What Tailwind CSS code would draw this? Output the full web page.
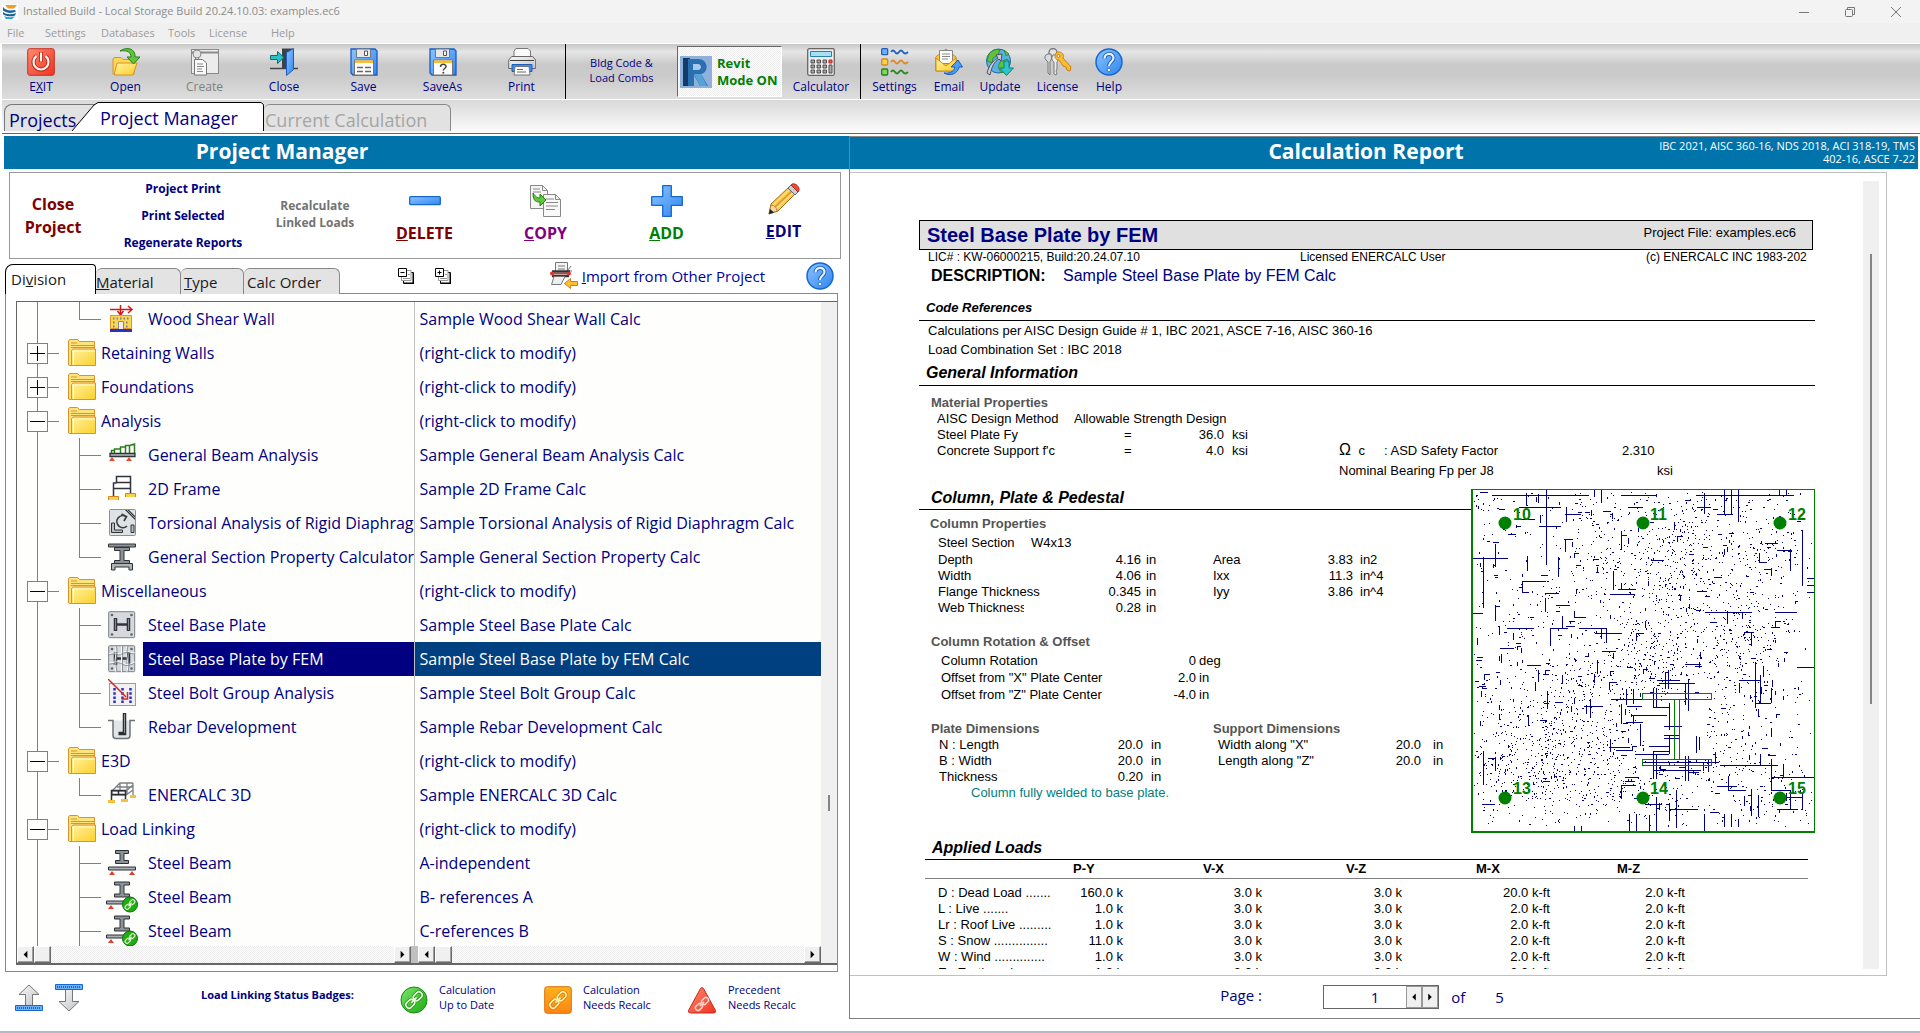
<!DOCTYPE html>
<html lang="en">
  <head>
    <meta charset="UTF-8" />
    <meta name="viewport" content="width=device-width, initial-scale=1.0" />
    <title>Installed Build - Local Storage Build 20.24.10.03: examples.ec6</title>
    <script src="https://cdn.jsdelivr.net/npm/@tailwindcss/browser@4"></script>
    <style>
      body {
        font-family: "Open Sans", "Noto Sans", sans-serif;
      }

      .report {
        font-family: "Liberation Sans", Arial, sans-serif;
      }

      .toolbar-bg {
        background: linear-gradient(#c6c6c6 0%, #e6e6e6 14%, #c9c9c9 38%, #cbcbcb 60%, #dedede 100%);
      }

      .dither {
        background: repeating-conic-gradient(#ececec 0% 25%, #ffffff 0% 50%) 0 0 / 2px 2px;
      }

      .bevel {
        border: 1px solid;
        border-color: #fff #696969 #696969 #fff;
        box-shadow: inset -1px -1px #a0a0a0;
      }
    </style>
  </head>
  <body class="h-screen flex flex-col overflow-hidden bg-white text-[#000080]">
    <!-- Icon sprite -->
    <svg class="absolute h-0 w-0" aria-hidden="true">
      <linearGradient id="gBlue" x1="0" y1="0" x2="1" y2="1"><stop offset="0" stop-color="#8cc4ff" /><stop offset="1" stop-color="#2f86f0" /></linearGradient>
      <linearGradient id="gYellow" x1="0" y1="0" x2="1" y2="1"><stop offset="0" stop-color="#fff2a0" /><stop offset="1" stop-color="#fcd02c" /></linearGradient>
      <linearGradient id="gRed" x1="0" y1="0" x2="1" y2="1"><stop offset="0" stop-color="#ff8a6e" /><stop offset="1" stop-color="#ef3323" /></linearGradient>
      <linearGradient id="gGray" x1="0" y1="0" x2="1" y2="1"><stop offset="0" stop-color="#f8f8f8" /><stop offset="1" stop-color="#c0c4c8" /></linearGradient>
      <linearGradient id="gGreen" x1="0" y1="0" x2="1" y2="1"><stop offset="0" stop-color="#7ae86a" /><stop offset="1" stop-color="#1ea814" /></linearGradient>
      <linearGradient id="gOrange" x1="0" y1="0" x2="0" y2="1"><stop offset="0" stop-color="#ffb21c" /><stop offset="1" stop-color="#ff8413" /></linearGradient>

      <symbol id="folder" viewBox="0 0 28 28">
        <path d="M.5 26V2l1-1.500h8l2 2h15v24H2z" fill="#fbe47c" stroke="#e0912a" />
        <path d="M3 4h6M3 6.500h23M3 8.500h24" stroke="#e0912a" fill="none" />
        <path d="M3.500 26.500V11.500L5 10h22.500v16.500z" fill="url(#gYellow)" stroke="#e0912a" />
        <path d="M5.500 26V12h21" stroke="#fffbd8" fill="none" />
      </symbol>
      <symbol id="shearWall" viewBox="0 0 28 28">
        <path d="M2 4.500h22M20 1l4 3.500-4 3.500M12.500 0v9M9.500 6l3 4 3-4" stroke="#d01818" stroke-width="1.500" fill="none" />
        <path d="M2.500 10.500h21v13h-21z" fill="#fbd754" stroke="#e0952a" />
        <path d="M5 13.500h16M5 17.500h3M5 21.500h3M18 17.500h3M18 21.500h3" stroke="#7c7c9c" stroke-width="2" stroke-dasharray="1.500 2" />
        <path d="M10.500 24v-7.500h5V24" fill="#eee" stroke="#888" />
        <path d="M2 24h22v3H2z" fill="#2730c8" />
      </symbol>
      <symbol id="beam" viewBox="0 0 28 28">
        <path d="M3.500 12V9.500h3V12M6.500 9.500V8h6v4M12.500 8V6h5v6M17.500 6V4.500h4V12M21.500 4.500l5-1.500v9" stroke="#2a7f1c" stroke-width="1.500" fill="none" />
        <path d="M2 12.500h25v3H2z" fill="#b8bcc0" stroke="#303338" stroke-width="1.300" />
        <path d="M4 16l3 4H1zM21 16l3 4h-6z" fill="#ef4333" />
      </symbol>
      <symbol id="frame" viewBox="0 0 28 28">
        <path d="M8.500 8V1.500h14V19M8.500 7.500h14M5.500 21v-13h3M5.500 13.500h17" stroke="#30343c" stroke-width="1.500" fill="none" />
        <path d="M1 22h9v3H1zM18 19h9v3h-9z" fill="#fcd24a" />
        <path d="M.500 21.500h10V25M.500 25v-3.500M17.500 18.500h10V22M17.500 22v-3.500" stroke="#d8821a" fill="none" />
      </symbol>
      <symbol id="torsion" viewBox="0 0 28 28">
        <rect x="1.500" y=".500" width="26" height="26" rx="1" fill="#dfe2e5" stroke="#8b9096" />
        <path d="M17 1h4l6 6v4z" fill="#2f3338" /><path d="M19 1l8 8" stroke="#9aa" />
        <path d="M3.500 14v9.500h11v-2.500h-8V14zM23 16h3v7.500h-3z" fill="#b9bec4" stroke="#2f3338" />
        <path d="M18 7.500a6 6 0 1 0 1 9.500M13.500 5l5 2.500-2.500 4.500" stroke="#3a3e44" stroke-width="1.700" fill="none" />
      </symbol>
      <symbol id="section" viewBox="0 0 28 28">
        <path d="M.500 1h27v3h-27zM6.500 4.500h15v3h-5.500v10h5.500v3h-15v-3h5.500v-10h-5.500z" fill="#8d9296" stroke="#2f3338" />
        <path d="M3.500 27v-6.500h21V27h-3.500v-3h-14v3z" fill="#aeb3b8" stroke="#2f3338" />
      </symbol>
      <symbol id="plate" viewBox="0 0 28 28">
        <rect x=".700" y=".700" width="26" height="26" rx="1" fill="#d5d9dd" stroke="#7a7f86" />
        <path d="M7.500 7v13M20.500 7v13" stroke="#30343a" stroke-width="3.500" /><path d="M8 13.500h12" stroke="#30343a" stroke-width="2.500" />
        <path d="M7.500 8v11M20.500 8v11" stroke="#868b92" />
        <g fill="#60656b"><circle cx="4" cy="4" r="1.300" /><circle cx="23.500" cy="4" r="1.300" /><circle cx="4" cy="23.500" r="1.300" /><circle cx="23.500" cy="23.500" r="1.300" /></g>
      </symbol>
      <symbol id="plateFem" viewBox="0 0 28 28">
        <use href="#plate" width="28" height="28" />
        <path d="M1 9c7-3 9 2 13-1s9 0 13 0M1 18c6 0 8-3 13 0s9 1 13-1M7 1c3 8-2 12 1 26M19 1c-3 8 3 14 0 26M13.500 1v26" stroke="#fff" stroke-width="1" fill="none" />
        <path d="M1 10c7-3 9 2 13-1s9 0 13 0M1 19c6 0 8-3 13 0s9 1 13-1M8 1c3 8-2 12 1 26M20 1c-3 8 3 14 0 26M14.500 1v26" stroke="#777c83" stroke-width=".800" fill="none" />
      </symbol>
      <symbol id="bolts" viewBox="0 0 28 28">
        <rect x="1.500" y="4.500" width="26" height="22" fill="#f1f1f4" stroke="#9a9ca4" />
        <path d="M6.500 9v15M14.500 9v15M22.500 9v15" stroke="#2c2cd0" stroke-width="2.500" stroke-dasharray="2.500 1.700" />
        <path d="M0 0l18 18M19.500 13v7h-6" stroke="#cc2b20" stroke-width="1.500" fill="none" />
      </symbol>
      <symbol id="rebar" viewBox="0 0 28 28">
        <path d="M0 7.500h5v15q0 3 3 3h11q3 0 3-3v-15h5" fill="#e2e5e8" stroke="#6b7178" stroke-width="1.500" />
        <path d="M16.500 0v20.500h-6" stroke="#2b2e33" stroke-width="3.500" fill="none" /><path d="M16.500 1v19" stroke="#8f949a" />
      </symbol>
      <symbol id="frame3d" viewBox="0 0 28 28">
        <path d="M8 6L12 2h13M8 6l-4 4v4M12 2v8M25 2v12M19 2v11M4 10h14l7-6M4 14h14l7-5M12 6h13M9 6h13" stroke="#7b8086" stroke-width="1.300" fill="none" />
        <path d="M3.500 19V9.500h14V19M10.500 9.500V14M3.500 13.500h14" stroke="#2c3036" stroke-width="1.500" fill="none" />
        <path d="M0 19h7v3H0zM13 18h7v3h-7zM22 14h6v3h-6z" fill="#f8bf3a" />
      </symbol>
      <symbol id="steelBeam" viewBox="0 0 28 28">
        <path d="M7.500 1.500h13v3h-4.500v7h4.500v3h-13v-3h4.500v-7h-4.500z" fill="#8d9296" stroke="#2c3036" />
        <path d="M.500 18h27v3H.500z" fill="#a9aeb4" stroke="#2c3036" />
        <path d="M4 22l3 4H1zM24 22l3 4h-6z" fill="#e83a2c" />
      </symbol>
      <symbol id="chain" viewBox="0 0 16 16">
        <g fill="none" transform="rotate(-45 8 8)">
          <rect x="0" y="5.500" width="7.500" height="5" rx="2.200" /><rect x="8.500" y="5.500" width="7.500" height="5" rx="2.200" /><path d="M5 8h6" />
        </g>
      </symbol>
      <symbol id="beamLinked" viewBox="0 0 32 32">
        <path d="M8.500 1h15v3h-5.500v9h5.500v3h-15v-3h5.500v-9h-5.500z" fill="#8d9296" stroke="#2c3036" />
        <path d="M.500 20h18v3H.500z" fill="#a9aeb4" stroke="#2c3036" /><path d="M5 24l3 4H2z" fill="#e83a2c" />
        <circle cx="24" cy="23.500" r="7.500" fill="#22ac14" stroke="#0c6f08" />
        <use href="#chain" x="18" y="17.500" width="12" height="12" stroke="#eaffd8" stroke-width="1.500" />
      </symbol>
      <symbol id="help" viewBox="0 0 28 28">
        <circle cx="14" cy="14" r="13" fill="url(#gBlue)" stroke="#1668cf" stroke-width="1.500" />
        <path d="M9.500 10.500c0-6 9-6 9-.500 0 4-4.500 3.500-4.500 8" stroke="#1a5db8" stroke-width="4" fill="none" /><path d="M9.500 10.500c0-6 9-6 9-.500 0 4-4.500 3.500-4.500 8" stroke="#e8f4ff" stroke-width="2.200" fill="none" />
        <circle cx="14" cy="22" r="1.800" fill="#e8f4ff" stroke="#1a5db8" stroke-width=".700" />
      </symbol>
      <symbol id="floppy" viewBox="0 0 28 28">
        <path d="M1 1h24l2 2v24H3l-2-2z" fill="url(#gBlue)" stroke="#1a5cc0" stroke-width="1.300" />
        <path d="M6.500 1h14v8.500h-14z" fill="#e6e9ec" stroke="#777" /><path d="M14.500 3h3v4.500h-3z" fill="#fff" stroke="#555" />
        <path d="M4.500 12h19v15h-19z" fill="#fdfdfd" stroke="#777" /><path d="M5 12.500h18v2.500H5z" fill="#fbbd2c" />
      </symbol>
      <symbol id="arrowL" viewBox="0 0 16 16"><path d="M10 4v8L6 8z" fill="#000" /></symbol>
      <symbol id="arrowR" viewBox="0 0 16 16"><path d="M6 4v8l4-4z" fill="#000" /></symbol>
    </svg>

    <!-- Title bar -->
    <header class="flex h-[23px] shrink-0 items-center bg-[#f3f3f3] pl-0.5 text-[11px] text-[#8c8c8c]">
      <svg class="h-4 w-4" viewBox="0 0 16 16">
        <rect width="16" height="16" fill="#fff" />
        <path d="M3 1h12l-3 3.500H6z" fill="#f59a23" /><path d="M1 3c2 3 6 4 12 3l1 1.500c-4 2-9 2-13-1zM1 8c3 2.500 8 3 13 1l-1 2.500c-3 1.500-8 1-12-1z" fill="#17639c" /><path d="M2 12c3 1.500 7 1.500 11 .500L10 15H4z" fill="#2aa4dc" />
      </svg>
      <h1 class="ml-[5px]">Installed Build - Local Storage Build 20.24.10.03: examples.ec6</h1>
      <div class="ml-auto flex items-center gap-[34px] pr-[18px]">
        <button aria-label="Minimize"><svg class="h-3 w-3" viewBox="0 0 12 12"><path d="M1 6.500h10" stroke="#777" /></svg></button>
        <button aria-label="Restore"><svg class="h-3 w-3" viewBox="0 0 12 12" fill="none" stroke="#777"><rect x="1.500" y="3.500" width="7" height="7" rx="1" /><path d="M3.500 3V1.500h7v7H9" /></svg></button>
        <button aria-label="Close window"><svg class="h-3 w-3" viewBox="0 0 12 12"><path d="M1 1l10 10M11 1L1 11" stroke="#777" /></svg></button>
      </div>
    </header>

    <!-- Menu bar -->
    <nav class="flex h-5 shrink-0 items-center bg-[#f0f0f0] pl-[7px] text-[11px] text-[#9b9b9b]">
      <button class="w-[38px] text-left">File</button>
      <button class="w-14 text-left">Settings</button>
      <button class="w-[67px] text-left">Databases</button>
      <button class="w-[41px] text-left">Tools</button>
      <button class="w-[62px] text-left">License</button>
      <button>Help</button>
    </nav>

    <!-- Toolbar -->
    <div class="toolbar-bg ml-0.5 flex h-[57px] shrink-0 border-y border-white text-xs leading-4">
      <button class="mr-1.5 flex w-[78px] flex-col items-center gap-[3px] pt-1">
        <svg class="h-7 w-7" viewBox="0 0 28 28"><rect x=".700" y=".700" width="26.600" height="26.600" rx="2" fill="url(#gRed)" stroke="#c9301f" /><path d="M9.500 8a7.500 7.500 0 1 0 9 0" fill="none" stroke="#b02a1c" stroke-width="4" /><path d="M14 4v10" stroke="#b02a1c" stroke-width="4" /><path d="M9.500 8a7.500 7.500 0 1 0 9 0M14 4.500v9" fill="none" stroke="#fff0ea" stroke-width="2.200" /></svg>
        <span>E<u>X</u>IT</span>
      </button>
      <button class="flex w-[79px] flex-col items-center gap-[3px] pt-1">
        <svg class="h-7 w-7" viewBox="0 0 28 28"><path d="M1 26V11l1-1.500h7l2 2h11V26z" fill="#fbd754" stroke="#d9912a" /><path d="M2 27l3-12h20l-4 12z" fill="url(#gYellow)" stroke="#d9912a" /><path d="M8 3C15-2 24 1 23 9h5l-6.500 7L15 9h4c0-5-4-7-11-6z" fill="#62c43c" stroke="#2a7f1c" /></svg>
        <span>Open</span>
      </button>
      <button class="flex w-[79px] flex-col items-center gap-[3px] pt-1 text-[#7f7f7f]" disabled>
        <svg class="h-7 w-7" viewBox="0 0 28 28"><rect x=".500" y="1.500" width="27" height="24" fill="#ececec" stroke="#8a8a8a" /><path d="M1 4.500h26" stroke="#8a8a8a" stroke-width="2" /><path d="M20 2.500h6" stroke="#fff" stroke-dasharray="1 1" /><circle cx="6" cy="6" r="4" fill="#e4e4e4" stroke="#888" /><path d="M4.500 10v3h3v-3" stroke="#888" fill="none" /><path d="M3.500 11.500h8l4 3.500v12h-12z" fill="#fafafa" stroke="#777" /><path d="M6 16h6M6 18.500h7M6 21h5M6 23.500h6" stroke="#888" /></svg>
        <span>Create</span>
      </button>
      <button class="flex w-20 flex-col items-center gap-[3px] pt-1">
        <svg class="h-7 w-7" viewBox="0 0 28 28"><path d="M0 20.500h28" stroke="#444" stroke-width="1.500" /><path d="M12 .500h11v20H12z" fill="#3d4248" /><path d="M16.500 4.500l7-4v21l-7 6z" fill="url(#gBlue)" stroke="#1a5cc0" /><path d="M.500 7.500h7v-4l6.500 6-6.500 6v-4h-7z" fill="#27c2c6" stroke="#0d6c74" /></svg>
        <span>Close</span>
      </button>
      <button class="flex w-[79px] flex-col items-center gap-[3px] pt-1">
        <svg class="h-7 w-7" viewBox="0 0 28 28"><use href="#floppy" width="28" height="28" /><path d="M7 19.500h6M15 19.500h6M7 23.500h6M15 23.500h6" stroke="#666" stroke-width="1.500" /></svg>
        <span>Save</span>
      </button>
      <button class="flex w-[79px] flex-col items-center gap-[3px] pt-1">
        <svg class="h-7 w-7" viewBox="0 0 28 28"><use href="#floppy" width="28" height="28" /><path d="M11.500 19c0-3.500 5.500-3.500 5.500-.500 0 2-2.700 2-2.700 4" fill="none" stroke="#444" stroke-width="1.500" /><circle cx="14.300" cy="24.800" r="1" fill="#444" /></svg>
        <span>SaveAs</span>
      </button>
      <button class="flex w-[79px] flex-col items-center gap-[3px] pt-1">
        <svg class="h-7 w-7" viewBox="0 0 28 28"><path d="M6 9V3l2-2.500h12L22.500 3v6z" fill="#fafafa" stroke="#777" /><path d="M.700 12l3-3.500h21l3 3.500v8.500H.700z" fill="url(#gGray)" stroke="#666" /><path d="M2 12.500h24" stroke="#444" /><path d="M4 16.500h20v7H4z" fill="#3a8cf0" stroke="#1a5cc0" /><path d="M7 18.500h14l1 8.500H6z" fill="#fdfdfd" stroke="#777" /><path d="M9 21.500h6M9 24h9" stroke="#666" /></svg>
        <span>Print</span>
      </button>
      <div class="ml-1 w-px bg-black"></div>
      <button class="w-[111px] pb-1 text-center text-[11px] leading-[15px]">Bldg Code &amp;<br />Load Combs</button>
      <button class="dither my-0.5 flex w-[105px] items-center gap-[5px] border border-t-[#666] border-r-white border-b-white border-l-[#666] pl-0.5 text-left text-[13px] leading-[17px] font-bold text-[#008000]">
        <svg class="h-8 w-8 shrink-0" viewBox="0 0 32 32"><rect width="32" height="32" fill="#8fb0dc" /><path d="M3 2h7v28H3z" fill="#123a66" /><path d="M8 3h10c11 0 11 14 3 15l7 12h-8l-6-11v11H8z" fill="#2a6fb0" /><path d="M13 8h5c4 0 4 6 0 6h-5z" fill="#a8c8ec" /><path d="M14 18l6 12h7l-6-12z" fill="#57a3d6" /></svg>
        <span class="whitespace-nowrap">Revit<br />Mode ON</span>
      </button>
      <button class="flex w-[78px] flex-col items-center gap-[3px] pt-1">
        <svg class="h-7 w-7" viewBox="0 0 28 28"><rect x=".700" y=".700" width="26.600" height="26.600" rx="1.500" fill="#ececec" stroke="#666" stroke-width="1.300" /><path d="M3.500 3.500h21v5h-21z" fill="#a7e0f4" stroke="#2a7fae" /><g fill="#aaa" stroke="#444" stroke-width=".900"><path d="M4 12h3.500v3H4zM10 12h3.500v3H10zM16 12h3.500v3H16zM4 17h3.500v3H4zM10 17h3.500v3H10zM16 17h3.500v3H16zM4 22h3.500v3H4zM10 22h3.500v3H10zM16 22h3.500v3H16zM22 17h3v8h-3z" /></g><path d="M22 12h3v3h-3z" fill="#ff5a4a" stroke="#b22" /></svg>
        <span>Calculator</span>
      </button>
      <div class="w-px bg-black"></div>
      <button class="flex w-[67px] flex-col items-center gap-[3px] pt-1">
        <svg class="h-7 w-7" viewBox="0 0 28 28"><g stroke-width="1.300"><rect x=".700" y=".700" width="6" height="6" rx="1" fill="#6db3ff" stroke="#1a5cc0" /><rect x=".700" y="11" width="6" height="6" rx="1" fill="#ffd24a" stroke="#d98a1c" /><rect x=".700" y="21" width="6" height="6" rx="1" fill="#7fd65a" stroke="#2a7f1c" /></g><g fill="none" stroke-width="1.800"><path d="M10 4q2-3 4 0t4 0 4 0 5 0" stroke="#1d62c4" /><path d="M10 14q2-3 4 0t4 0 4 0 5 0" stroke="#dd8a2a" /><path d="M10 24q2-3 4 0t4 0 4 0 5 0" stroke="#2a8a1c" /></g></svg>
        <span>Settings</span>
      </button>
      <button class="flex w-[42px] flex-col items-center gap-[3px] pt-1">
        <svg class="h-7 w-7" viewBox="0 0 28 28"><path d="M.700 9L11 1l10 8v14H.700z" fill="#fbc93a" stroke="#d08a1c" /><path d="M4.500 2.500h13v13h-13z" fill="#fff" stroke="#888" /><path d="M7 6h8M7 8.500h8M7 11h6" stroke="#888" /><path d="M1 10l10 8 10-8v13H1z" fill="url(#gYellow)" stroke="#d08a1c" /><path d="M9 25c8 1 10-3 11-6h-4l7-7 4.500 7h-3.500c-1 6-8 10-15 6z" fill="#4a9cf5" stroke="#1a5cc0" /></svg>
        <span>Email</span>
      </button>
      <button class="flex w-[60px] flex-col items-center gap-[3px] pt-1">
        <svg class="h-7 w-7" viewBox="0 0 28 28"><circle cx="12.500" cy="13" r="12" fill="#58b0ee" stroke="#1c6a9a" /><path d="M3 6c4-5 9-5 11-4l-2 5-5 3-1 5-5-2zM14 14l7-3 3 4-3 7-6 3-3-6zM18 2l5 4-3 2z" fill="#5fc13c" stroke="#2a7f1c" stroke-width=".700" /><path d="M1 25c2-8 6-12 11-15l-2-3 6-1-1 7-2-2C8 14 6 18 4 27z" fill="#c9ced4" stroke="#4b5158" /><path d="M18 13h5v7h4.500l-7 7.500-7-7.500H18z" fill="#2cc5c8" stroke="#0d7c84" /></svg>
        <span>Update</span>
      </button>
      <button class="flex w-[55px] flex-col items-center gap-[3px] pt-1">
        <svg class="h-7 w-7" viewBox="0 0 28 28"><circle cx="9" cy="4.500" r="4" fill="none" stroke="#777" stroke-width="1.300" /><path d="M4 6a3.500 3.500 0 0 0-2 6l2 2v11l2 2V14q3-4 1-8z" fill="#d9dcdf" stroke="#777" /><path d="M9 7c-2 3-1 6 1 7v12l2 1 1-2-1-2 1-2V14c2-2 1-6-1-7z" fill="#ececec" stroke="#777" /><path d="M12 5c4-3 9 1 7 5l8 9-1 4-3-1-1-3-3-1-4-6c-4 0-5-4-3-7z" fill="#fbbd2c" stroke="#c8821c" /><circle cx="14.500" cy="8" r="1.500" fill="#eee" stroke="#c8821c" /></svg>
        <span>License</span>
      </button>
      <button class="flex w-12 flex-col items-center gap-[3px] pt-1">
        <svg class="h-7 w-7"><use href="#help" /></svg>
        <span>Help</span>
      </button>
    </div>

    <!-- Page tabs -->
    <div class="ml-0.5 flex h-[34px] shrink-0 items-end border-b border-[#666] bg-linear-to-b from-[#d9d9d9] to-[#fcfcfc] pb-0.5 pl-0.5 text-lg leading-6">
      <button class="h-[27px] w-[93px] rounded-tl-lg border-t border-l border-[#777] bg-[#e2e2e2] pt-[3px] pl-1 text-left leading-5">Projects</button>
      <button class="relative -ml-[25px] h-[29px] w-[192px] pt-[3px] pl-7 text-left leading-5">
        <svg class="absolute inset-0 h-full w-full" viewBox="0 0 192 29" preserveAspectRatio="none"><path d="M0 29L22 3l4-2.500h163l2.500 2V29" fill="#fff" stroke="#000" /></svg>
        <span class="relative">Project Manager</span>
      </button>
      <button class="h-[27px] w-[187px] rounded-t-md border-t border-r border-[#888] bg-[#e2e2e2] pt-[3px] pl-px text-left leading-5 text-[#a5a5a5]">Current Calculation</button>
    </div>

    <main class="mt-0.5 grid min-h-0 flex-1 grid-cols-[849fr_1071fr]">
      <!-- Project manager -->
      <section class="flex min-h-0 min-w-0 flex-col pl-1">
        <h2 class="h-[33px] shrink-0 bg-[#0073ab] pr-[289px] text-center text-[21px] leading-[31px] font-bold text-white">Project Manager</h2>

        <div class="mt-[3px] mr-2 ml-[5px] flex h-[87px] shrink-0 border border-[#999] font-bold">
          <button class="w-[86px] text-base leading-[23px] text-[#800000]">Close<br />Project</button>
          <div class="flex w-[174px] flex-col items-center justify-center gap-[11px] text-xs leading-4">
            <button>Project Print</button>
            <button>Print Selected</button>
            <button>Regenerate Reports</button>
          </div>
          <button class="w-[90px] pb-1 text-xs leading-[17px] text-[#737373]" disabled>Recalculate<br />Linked Loads</button>
          <div class="ml-1 flex flex-1 text-base leading-5">
            <button class="flex flex-1 flex-col items-center gap-1.5 pt-3 text-[#800000]">
              <svg class="h-8 w-8" viewBox="0 0 32 32"><rect x=".700" y="11.700" width="30.600" height="8" rx="1" fill="url(#gBlue)" stroke="#1668cf" stroke-width="1.300" /></svg>
              <span><u>D</u>ELETE</span>
            </button>
            <button class="flex flex-1 flex-col items-center gap-1.5 pt-3 text-[#800080]">
              <svg class="h-8 w-8" viewBox="0 0 32 32"><path d="M.500.500h12l5 5v18H.500z" fill="#f6f6f6" stroke="#888" /><path d="M12.500.500v5h5M3 4h7M3 7h8" stroke="#888" fill="none" /><path d="M13.500 9.500h12l5 5v17h-17z" fill="#f9f9f9" stroke="#888" /><path d="M25.500 9.500v5h5M16 14h8M16 17.500h12M16 21h12M16 24.500h9" stroke="#888" fill="none" /><path d="M3 8c0 9 4 9 7 9v4l6-6-6-6v4c-3 0-4-1-7-5z" fill="#5ec93a" stroke="#2a7f1c" /></svg>
              <span><u>C</u>OPY</span>
            </button>
            <button class="flex flex-1 flex-col items-center gap-1.5 pt-3 text-[#008000]">
              <svg class="h-8 w-8" viewBox="0 0 32 32"><path d="M11.700.700h8.600v11h11v8.600h-11v11h-8.600v-11h-11v-8.600h11z" fill="url(#gBlue)" stroke="#1668cf" stroke-width="1.300" stroke-linejoin="round" /></svg>
              <span><u>A</u>DD</span>
            </button>
            <button class="flex w-[113px] flex-col items-center gap-1.5 pt-[10px]">
              <svg class="h-8 w-8" viewBox="0 0 32 32"><path d="M1 31l2-10L21 4l7 6L10 28z" fill="#fbc94a" stroke="#a8691c" /><path d="M5 22L23 5M8 26L26 9" stroke="#fff0a8" /><path d="M7 24L25 7" stroke="#e0962a" stroke-width="1.500" /><path d="M1 31l2-9c3 0 6 3 6 6z" fill="#f0d9a8" stroke="#a8691c" stroke-width=".700" /><path d="M1 31l1-5 4 3.500z" fill="#222" /><path d="M20 5l3-3 7 7-3 3z" fill="#c9ced4" stroke="#666" /><path d="M23 2c3-4 11 3 7 7z" fill="#f0483a" stroke="#a8281c" /></svg>
              <span><u>E</u>DIT</span>
            </button>
          </div>
        </div>

        <div class="z-10 mt-1.5 ml-px flex h-[29px] shrink-0 items-end pr-[11px] text-[15px] leading-6 text-[#1a1a1a]">
          <button class="h-[30px] w-[91px] rounded-tl-lg rounded-tr-sm border border-b-0 border-black bg-white pb-0.5 pl-[5px] text-left">Di<u>v</u>ision</button>
          <button class="h-[26px] w-[85px] rounded-t-md border border-b-0 border-l-0 border-[#888] bg-[#e3e3e3] text-left"><u>M</u>aterial</button>
          <button class="h-[26px] w-[63px] rounded-t-md border border-b-0 border-l-0 border-[#888] bg-[#e3e3e3] pl-[3px] text-left"><u>T</u>ype</button>
          <button class="h-[26px] w-[96px] rounded-t-md border border-b-0 border-l-0 border-[#888] bg-[#e3e3e3] pl-[3px] text-left">Calc Order</button>
          <div class="ml-[58px] flex flex-1 items-center pb-1">
            <button aria-label="Collapse all"><svg class="h-4 w-4" viewBox="0 0 16 16"><path d="M5.500 4.500h10v11h-10z" fill="#fff" stroke="#000" /><path d="M15.500 5v10.500H6" stroke="#000" stroke-width="2" fill="none" /><path d="M3.500 2.500h9.500v10h-9.500z" fill="#fff" stroke="#999" /><path d="M.500.500h8v8h-8z" fill="#fff" stroke="#000" /><path d="M2.500 4.500h4" stroke="#000" /><path d="M10 6.500h2M5 10.500h7" stroke="#999" /></svg></button>
            <button class="ml-[21px]" aria-label="Expand all"><svg class="h-4 w-4" viewBox="0 0 16 16"><path d="M5.500 4.500h10v11h-10z" fill="#fff" stroke="#000" /><path d="M15.500 5v10.500H6" stroke="#000" stroke-width="2" fill="none" /><path d="M3.500 2.500h9.500v10h-9.500z" fill="#fff" stroke="#999" /><path d="M.500.500h8v8h-8z" fill="#fff" stroke="#000" /><path d="M2.500 4.500h4M4.500 2.500v4" stroke="#000" /><path d="M10 6.500h2M5 10.500h7" stroke="#999" /></svg></button>
            <button class="ml-auto flex items-center gap-1 text-[#0000a0]">
              <svg class="h-7 w-7" viewBox="0 0 28 28"><path d="M5.500 10V.500h12V10M21 4l-4 5h5" fill="#f4f4f4" stroke="#777" /><path d="M8 4h7M8 7h7" stroke="#777" /><path d="M2 9.500h18M2 14h17" stroke="#333" stroke-width="2.500" /><path d="M2 11.500h18" stroke="#e03528" stroke-width="1.500" /><circle cx="2" cy="11.500" r="2" fill="#e03528" /><circle cx="19" cy="11.500" r="2" fill="#e03528" /><path d="M4 14.500h11l-4 8H1.500z" fill="#eee" stroke="#777" /><path d="M14.500 21.500l6-5v3h7v4h-7v3z" fill="#fbc02c" stroke="#c8821c" /></svg>
              <span><u>I</u>mport from Other Project</span>
            </button>
            <button class="mr-1 ml-[41px]" aria-label="Help"><svg class="h-7 w-7"><use href="#help" /></svg></button>
          </div>
        </div>

        <div class="-mt-px mr-[11px] ml-px flex min-h-0 flex-1 flex-col border border-[#888] pt-[7px] pb-1.5 pl-[10px]">
          <div class="grid min-h-0 flex-1 grid-cols-[398fr_407fr_16px] border-t border-b-2 border-l border-[#666] bg-[#fefefc]">
            <div class="flex min-h-0 min-w-0 flex-col">
              <ul id="treeNames" class="min-h-0 flex-1 overflow-hidden border-r border-[#c0c0c0]"></ul>
              <div class="dither flex h-[17px] shrink-0">
                <button class="bevel w-[17px] bg-[#f0f0f0]" aria-label="Scroll left"><svg class="h-[15px] w-[15px]"><use href="#arrowL" /></svg></button>
                <div class="bevel w-[17px] bg-[#f0f0f0]"></div>
                <button class="bevel ml-auto w-[17px] bg-[#f0f0f0]" aria-label="Scroll right"><svg class="h-[15px] w-[15px]"><use href="#arrowR" /></svg></button>
                <div class="w-1 bg-[#c0c0c0]"></div>
              </div>
            </div>
            <div class="flex min-h-0 min-w-0 flex-col">
              <ul id="treeDescriptions" class="min-h-0 flex-1 overflow-hidden"></ul>
              <div class="dither flex h-[17px] shrink-0">
                <div class="w-[3px] bg-[#c0c0c0]"></div>
                <button class="bevel w-[17px] bg-[#f0f0f0]" aria-label="Scroll left"><svg class="h-[15px] w-[15px]"><use href="#arrowL" /></svg></button>
                <div class="bevel w-[17px] bg-[#f0f0f0]"></div>
                <button class="bevel ml-auto w-[17px] bg-[#f0f0f0]" aria-label="Scroll right"><svg class="h-[15px] w-[15px]"><use href="#arrowR" /></svg></button>
              </div>
            </div>
            <div class="flex flex-col items-center bg-[#f0f0f0] pb-[152px]">
              <div class="mt-auto h-4 w-0.5 bg-[#858585]"></div>
            </div>
          </div>
        </div>

        <div class="flex h-[59px] shrink-0 items-start pt-3 pl-[11px] text-[11px] leading-[15px]">
          <button aria-label="Move to top"><svg class="h-7 w-7" viewBox="0 0 28 28"><path d="M14 1l10 9.500h-6.500v11h-7v-11H4z" fill="url(#gGray)" stroke="#777" /><path d="M.500 21.500h27v5H.500z" fill="#6db0fa" stroke="#1668cf" /><path d="M2 24h24" stroke="#1668cf" stroke-width="2" stroke-dasharray="1 1" /></svg></button>
          <button class="ml-3" aria-label="Move to bottom"><svg class="h-7 w-7" viewBox="0 0 28 28"><path d="M14 27L4 17.500h6.500v-12h7v12H24z" fill="url(#gGray)" stroke="#777" /><path d="M.500.500h27v5H.500z" fill="#6db0fa" stroke="#1668cf" /><path d="M2 3h24" stroke="#1668cf" stroke-width="2" stroke-dasharray="1 1" /></svg></button>
          <p class="ml-[118px] w-[199px] pt-[3px] font-bold">Load Linking Status Badges:</p>
          <svg class="mt-0.5 h-7 w-7" viewBox="0 0 28 28"><circle cx="14" cy="14" r="13" fill="url(#gGreen)" stroke="#158a0e" /><use href="#chain" x="4" y="4" width="20" height="20" stroke="#178a10" stroke-width="2.600" /><use href="#chain" x="4" y="4" width="20" height="20" stroke="#eaffd8" stroke-width="1.400" /></svg>
          <p class="-mt-0.5 ml-[11px] w-[105px]">Calculation<br />Up to Date</p>
          <svg class="mt-0.5 h-7 w-7" viewBox="0 0 28 28"><rect x=".700" y=".700" width="26.600" height="26.600" rx="2.500" fill="url(#gOrange)" stroke="#d8720c" /><use href="#chain" x="4" y="4" width="20" height="20" stroke="#d8720c" stroke-width="2.600" /><use href="#chain" x="4" y="4" width="20" height="20" stroke="#fff3a0" stroke-width="1.400" /></svg>
          <p class="-mt-0.5 ml-[11px] w-[105px]">Calculation<br />Needs Recalc</p>
          <svg class="mt-0.5 h-7 w-7" viewBox="0 0 28 28"><path d="M12.500 2.500q1.500-2 3 0l12 22q.500 2.500-2 2.500h-23q-2.500 0-2-2.500z" fill="url(#gRed)" stroke="#c9281c" /><use href="#chain" x="6" y="10" width="16" height="16" stroke="#ffd0c4" stroke-width="1.500" /></svg>
          <p class="-mt-0.5 ml-3">Precedent<br />Needs Recalc</p>
        </div>
      </section>

      <!-- Calculation report -->
      <section class="mb-3 flex min-h-0 min-w-0 flex-col border-b border-l border-[#808080]">
        <div class="relative mr-0.5 flex h-[33px] shrink-0 items-center justify-center border-t border-[#888] bg-[#0073ab] text-white">
          <h2 class="pr-9 pb-0.5 text-[21px] font-bold">Calculation Report</h2>
          <p class="absolute top-0.5 right-[3px] w-[270px] text-right text-[11px] leading-[13px]">IBC 2021, AISC 360-16, NDS 2018, ACI 318-19, TMS 402-16, ASCE 7-22</p>
        </div>

        <div class="mt-[3px] mr-[33px] flex min-h-0 flex-1 border-t border-r border-b border-[#c0c0c0] pt-2 pr-[7px] pb-1.5">
          <article class="report min-w-0 flex-1 overflow-hidden pr-12 pl-[69px] text-[13px] leading-4 text-black">
            <header class="mt-[39px] mr-0.5 flex h-[30px] items-center justify-between border border-black bg-[#e0e0e0] pr-4 pl-[7px]">
              <h3 class="text-xl font-bold text-[#000080]">Steel Base Plate by FEM</h3>
              <p class="pb-1">Project File: examples.ec6</p>
            </header>
            <div class="flex pl-[9px] text-xs leading-[15px]">
              <p class="w-[372px]">LIC# : KW-06000215, Build:20.24.07.10</p>
              <p>Licensed ENERCALC User</p>
              <p class="mr-2 ml-auto w-[161px] overflow-hidden whitespace-nowrap">(c) ENERCALC INC 1983-2024</p>
            </div>
            <div class="flex pl-3 text-base leading-[22px]">
              <h4 class="w-[132px] font-bold">DESCRIPTION:</h4>
              <p class="text-[#000080]">Sample Steel Base Plate by FEM Calc</p>
            </div>

            <h4 class="mt-3 h-[22px] border-b border-black pl-[7px] leading-[18px] font-bold italic">Code References</h4>
            <p class="pl-[9px] leading-[19px]">Calculations per AISC Design Guide # 1, IBC 2021, ASCE 7-16, AISC 360-16</p>
            <p class="pl-[9px] leading-[19px]">Load Combination Set : IBC 2018</p>
            <h4 class="mt-[3px] h-6 border-b border-black pl-[7px] text-base leading-[22px] font-bold italic">General Information</h4>

            <h5 class="mt-[9px] pl-3 font-bold text-[#555]">Material Properties</h5>
            <div class="flex items-start pl-[18px]">
              <table class="w-[402px] table-fixed">
                <colgroup><col class="w-[137px]" /><col class="w-[88px]" /><col class="w-[62px]" /><col /></colgroup>
                <tbody>
                  <tr><th class="text-left font-normal" scope="row">AISC Design Method</th><td colspan="3">Allowable Strength Design</td></tr>
                  <tr><th class="text-left font-normal" scope="row">Steel Plate Fy</th><td class="pl-[50px]">=</td><td class="text-right">36.0</td><td class="pl-2">ksi</td></tr>
                  <tr><th class="text-left font-normal" scope="row">Concrete Support f'c</th><td class="pl-[50px]">=</td><td class="text-right">4.0</td><td class="pl-2">ksi</td></tr>
                </tbody>
              </table>
              <div class="mt-[30px] leading-5">
                <div class="flex">
                  <p class="w-[45px]"><span class="mr-1 text-base leading-4">Ω</span> c</p>
                  <p class="w-[115px] overflow-hidden whitespace-nowrap">: ASD Safety Factor</p>
                  <p class="pl-[123px]">2.310</p>
                </div>
                <div class="flex">
                  <p class="w-[318px]">Nominal Bearing Fp per J8</p>
                  <p>ksi</p>
                </div>
              </div>
            </div>

            <div class="mt-2 flex">
              <div class="min-w-0 flex-1">
                <h4 class="h-[21px] border-b border-black pl-3 text-base leading-[18px] font-bold italic">Column, Plate &amp; Pedestal</h4>
                <h5 class="mt-1.5 pl-[11px] font-bold text-[#555]">Column Properties</h5>
                <p class="mt-0.5 ml-[19px] leading-[18px]"><span class="inline-block w-[93px]">Steel Section</span>W4x13</p>
                <table class="ml-[19px] w-[500px] table-fixed whitespace-nowrap">
                  <colgroup><col class="w-[118px]" /><col class="w-[85px]" /><col class="w-[72px]" /><col class="w-[80px]" /><col class="w-[60px]" /><col /></colgroup>
                  <tbody>
                    <tr><td>Depth</td><td class="text-right">4.16</td><td class="pl-[5px]">in</td><td>Area</td><td class="text-right">3.83</td><td class="pl-[7px]">in2</td></tr>
                    <tr><td>Width</td><td class="text-right">4.06</td><td class="pl-[5px]">in</td><td>Ixx</td><td class="text-right">11.3</td><td class="pl-[7px]">in^4</td></tr>
                    <tr><td>Flange Thickness</td><td class="text-right">0.345</td><td class="pl-[5px]">in</td><td>Iyy</td><td class="text-right">3.86</td><td class="pl-[7px]">in^4</td></tr>
                    <tr><td><div class="w-[86px] overflow-hidden">Web Thickness</div></td><td class="text-right">0.28</td><td class="pl-[5px]">in</td></tr>
                  </tbody>
                </table>

                <h5 class="mt-[18px] pl-3 font-bold text-[#555]">Column Rotation &amp; Offset</h5>
                <table class="mt-0.5 ml-[22px] w-[320px] table-fixed leading-[17px]">
                  <colgroup><col class="w-[200px]" /><col class="w-[55px]" /><col /></colgroup>
                  <tbody>
                    <tr><td>Column Rotation</td><td class="text-right">0</td><td class="pl-[3px]">deg</td></tr>
                    <tr><td>Offset from "X" Plate Center</td><td class="text-right">2.0</td><td class="pl-[3px]">in</td></tr>
                    <tr><td>Offset from "Z" Plate Center</td><td class="text-right">-4.0</td><td class="pl-[3px]">in</td></tr>
                  </tbody>
                </table>

                <div class="mt-[18px] flex pl-3">
                  <div class="w-[282px]">
                    <h5 class="font-bold text-[#555]">Plate Dimensions</h5>
                    <table class="ml-2 w-[260px] table-fixed">
                      <colgroup><col class="w-[140px]" /><col class="w-[64px]" /><col /></colgroup>
                      <tbody>
                        <tr><td>N : Length</td><td class="text-right">20.0</td><td class="pl-2">in</td></tr>
                        <tr><td>B : Width</td><td class="text-right">20.0</td><td class="pl-2">in</td></tr>
                        <tr><td>Thickness</td><td class="text-right">0.20</td><td class="pl-2">in</td></tr>
                      </tbody>
                    </table>
                    <p class="pl-10 text-[#008080]">Column fully welded to base plate.</p>
                  </div>
                  <div class="flex-1">
                    <h5 class="font-bold text-[#555]">Support Dimensions</h5>
                    <table class="ml-[5px] w-[250px] table-fixed">
                      <colgroup><col class="w-[140px]" /><col class="w-[63px]" /><col /></colgroup>
                      <tbody>
                        <tr><td>Width along "X"</td><td class="text-right">20.0</td><td class="pl-3">in</td></tr>
                        <tr><td>Length along "Z"</td><td class="text-right">20.0</td><td class="pl-3">in</td></tr>
                      </tbody>
                    </table>
                  </div>
                </div>
              </div>

              <!-- Plate mesh plot -->
              <svg class="h-[344px] w-[344px] shrink-0" viewBox="0 0 344 344" shape-rendering="crispEdges">
                <path id="mesh" fill="#000080" />
                <path d="M1 0v344M0 343h344" stroke="#008000" stroke-width="2" />
                <path d="M0 .5h344M343.500 0v344" stroke="#008000" />
                <path d="M171.500 204.500h69v6h-69zM203.500 210.500v60M208.500 210.500v60M171.500 270.500h69v6h-69z" fill="none" stroke="#008000" />
                <g fill="#008000" shape-rendering="auto">
                  <circle cx="34" cy="34" r="6.500" /><circle cx="172" cy="34" r="6.500" /><circle cx="309" cy="34" r="6.500" />
                  <circle cx="34" cy="309" r="6.500" /><circle cx="172" cy="309" r="6.500" /><circle cx="309" cy="309" r="6.500" />
                </g>
                <g fill="#008000" font-size="16" font-weight="bold">
                  <text x="42" y="31">10</text><text x="179" y="31">11</text><text x="317" y="31">12</text>
                  <text x="42" y="305">13</text><text x="179" y="305">14</text><text x="317" y="305">15</text>
                </g>
              </svg>
            </div>

            <h4 class="mt-1.5 mr-[7px] ml-[6px] h-[21px] border-b border-black pl-[7px] text-base leading-[18px] font-bold italic">Applied Loads</h4>
            <table class="ml-[6px] w-[883px] table-fixed">
              <colgroup><col class="w-[148px]" /><col class="w-[50px]" /><col class="w-[139px]" /><col class="w-[140px]" /><col class="w-[148px]" /><col class="w-[135px]" /><col /></colgroup>
              <thead>
                <tr class="border-b border-[#808080] text-left leading-[18px]">
                  <th></th><th>P-Y</th><th class="pl-20">V-X</th><th class="pl-[84px]">V-Z</th><th class="pl-[74px]">M-X</th><th class="pl-[67px]">M-Z</th><th></th>
                </tr>
              </thead>
              <tbody id="loads" class="text-right"></tbody>
            </table>
          </article>
          <div class="flex w-4 shrink-0 flex-col items-center bg-[#f0f0f0] pt-[73px]">
            <div class="h-[450px] w-0.5 bg-[#858585]"></div>
          </div>
        </div>

        <div class="flex h-[42px] shrink-0 items-center justify-center pr-[46px] text-[15px]">
          <label for="pageNumber" class="w-[103px] pb-1">Page :</label>
          <div class="flex h-6 w-[116px] border border-[#666]">
            <input id="pageNumber" type="text" value="1" class="w-[82px] bg-white pr-[27px] text-right outline-none" />
            <button class="w-4 border border-[#999] bg-[#f0f0f0]" aria-label="Previous page"><svg class="h-[14px] w-[14px]"><use href="#arrowL" /></svg></button>
            <button class="w-4 border border-[#999] bg-[#f0f0f0]" aria-label="Next page"><svg class="h-[14px] w-[14px]"><use href="#arrowR" /></svg></button>
          </div>
          <span class="ml-3 w-11">of</span>
          <span>5</span>
        </div>
      </section>
    </main>
    <footer class="h-0.5 shrink-0 bg-[#b4b9c9]"></footer>

    <script>
      // [name, description, icon, state]; folders are "open"/"closed", leaves "mid"/"last"
      const rows = [
        ["Wood Shear Wall", "Sample Wood Shear Wall Calc", "shearWall", "last"],
        ["Retaining Walls", "(right-click to modify)", "folder", "closed"],
        ["Foundations", "(right-click to modify)", "folder", "closed"],
        ["Analysis", "(right-click to modify)", "folder", "open"],
        ["General Beam Analysis", "Sample General Beam Analysis Calc", "beam", "mid"],
        ["2D Frame", "Sample 2D Frame Calc", "frame", "mid"],
        ["Torsional Analysis of Rigid Diaphragm", "Sample Torsional Analysis of Rigid Diaphragm Calc", "torsion", "mid"],
        ["General Section Property Calculator", "Sample General Section Property Calc", "section", "last"],
        ["Miscellaneous", "(right-click to modify)", "folder", "open"],
        ["Steel Base Plate", "Sample Steel Base Plate Calc", "plate", "mid"],
        ["Steel Base Plate by FEM", "Sample Steel Base Plate by FEM Calc", "plateFem", "mid"],
        ["Steel Bolt Group Analysis", "Sample Steel Bolt Group Calc", "bolts", "mid"],
        ["Rebar Development", "Sample Rebar Development Calc", "rebar", "last"],
        ["E3D", "(right-click to modify)", "folder", "open"],
        ["ENERCALC 3D", "Sample ENERCALC 3D Calc", "frame3d", "last"],
        ["Load Linking", "(right-click to modify)", "folder", "open"],
        ["Steel Beam", "A-independent", "steelBeam", "mid"],
        ["Steel Beam", "B- references A", "beamLinked", "mid"],
        ["Steel Beam", "C-references B", "beamLinked", "mid"],
      ];
      const selected = 10;

      const names = document.getElementById("treeNames");
      const descriptions = document.getElementById("treeDescriptions");

      rows.forEach(([name, description, icon, state], i) => {
        const li = document.createElement("li");
        li.className = "flex h-[34px] items-center whitespace-nowrap";
        if (icon === "folder") {
          const plus = state === "closed" ? "M20.500 10v15" : "";
          li.innerHTML = `
            <svg class="h-[34px] w-[51px] shrink-0" fill="none" stroke="#808080">
              <path d="M20.500 0v34M31 17.500h11" />
              <rect x="10.500" y="7.500" width="20" height="20" fill="#fefefc" />
              <path d="M13 17.500h15${plus}" stroke="#000" />
            </svg>
            <svg class="h-7 w-7 shrink-0"><use href="#folder" /></svg>
            <span class="pl-[5px]">${name}</span>`;
        } else {
          const stem = state === "last" ? "M62.500 0v17.500" : "M62.500 0v34";
          const wide = icon === "beamLinked";
          li.innerHTML = `
            <svg class="${wide ? "h-[34px] w-[89px] shrink-0" : "h-[34px] w-[91px] shrink-0"}" fill="none" stroke="#808080">
              <path d="M20.500 0v34${stem}M62 17.500h22" />
            </svg>
            <svg class="${wide ? "h-8 w-8 shrink-0" : "h-7 w-7 shrink-0"}"><use href="#${icon}" /></svg>
            <span class="${i === selected ? "ml-[7px] h-full flex-1 bg-[#000080] pl-[5px] leading-[34px] text-white" : wide ? "pl-[10px]" : "pl-3"}">${name}</span>`;
        }
        names.appendChild(li);

        const desc = document.createElement("li");
        desc.className =
          i === selected
            ? "h-[34px] bg-[#004080] pl-[5px] leading-[34px] whitespace-nowrap text-white"
            : "h-[34px] pl-[5px] leading-[34px] whitespace-nowrap";
        desc.textContent = description;
        descriptions.appendChild(desc);
      });

      // Applied loads
      const loads = [
        ["D : Dead Load .......", "160.0", "3.0", "3.0", "20.0", "2.0"],
        ["L : Live .......", "1.0", "3.0", "3.0", "2.0", "2.0"],
        ["Lr : Roof Live .........", "1.0", "3.0", "3.0", "2.0", "2.0"],
        ["S : Snow ...............", "11.0", "3.0", "3.0", "2.0", "2.0"],
        ["W : Wind ..............", "1.0", "3.0", "3.0", "2.0", "2.0"],
        ["E : Earthquake ....", "1.0", "3.0", "3.0", "2.0", "2.0"],
      ];
      document.getElementById("loads").innerHTML = loads
        .map(
          ([name, py, vx, vz, mx, mz], i) => `
            <tr>
              <th class="${i ? "pl-[13px] text-left font-normal" : "pt-1.5 pl-[13px] text-left font-normal"}" scope="row">${name}</th>
              <td class="${i ? "" : "pt-1.5"}">${py} k</td>
              <td class="${i ? "" : "pt-1.5"}">${vx} k</td>
              <td class="${i ? "" : "pt-1.5"}">${vz} k</td>
              <td class="${i ? "" : "pt-1.5"}">${mx} k-ft</td>
              <td class="${i ? "" : "pt-1.5"}">${mz} k-ft</td>
            </tr>`
        )
        .join("");

      // Mesh segments, three units to a pixel: x, y, length
      const across = [
        130,72,290, 516,72,107, 741,72,293, 210,108,125, 537,108,45, 745,108,43, 270,166,66, 68,262,112, 345,205,27,
        348,129,48, 210,146,47, 805,129,47, 948,216,40, 984,238,44, 931,274,23, 945,295,25, 1074,322,22, 1074,343,22,
        1074,364,22, 220,331,73, 220,364,20, 288,367,42, 321,403,42, 376,439,37, 484,370,76, 507,355,53, 174,472,80,
        305,472,55, 390,472,83, 438,487,80, 460,541,43, 68,427,37, 153,532,42, 768,424,140, 978,424,65, 1045,589,50,
        870,628,65, 919,697,48, 708,580,47, 625,628,70, 630,637,107, 613,709,48, 549,733,104, 486,685,95, 406,706,58,
        536,706,45, 531,754,50, 646,766,55, 646,793,45, 646,802,45, 600,826,60, 560,850,102, 613,841,48, 484,829,60,
        505,838,48, 580,874,230, 613,898,143, 813,883,173, 967,919,130, 967,959,60, 984,1015,64, 118,862,22,
        100,1000,38, 661,1015,86, 590,1000,50, 516,943,45, 805,946,60, 838,958,55, 528,919,42, 528,931,30, 1000,979,60,
      ];
      const down = [
        292,57,225, 232,68,40, 139,219,68, 103,259,152, 349,204,40, 436,57,20, 457,57,38, 351,108,44, 766,68,64,
        826,57,75, 847,57,75, 868,57,95, 991,57,15, 1012,57,15, 1060,177,168, 1024,235,66, 931,250,28, 967,292,25,
        328,258,60, 235,255,45, 220,331,33, 289,381,42, 376,420,20, 493,300,56, 304,472,53, 340,435,37, 472,472,45,
        457,472,34, 139,404,48, 835,420,40, 919,573,137, 934,612,85, 967,652,46, 718,625,95, 709,636,65, 649,603,50,
        658,597,56, 613,652,58, 622,652,58, 661,697,80, 553,733,28, 532,655,48, 553,655,45, 424,685,57, 295,660,53,
        268,597,35, 516,700,60, 574,760,65, 661,796,55, 613,841,85, 622,850,75, 484,804,38, 709,856,75, 718,856,75,
        934,850,34, 967,865,95, 1024,959,60, 1060,967,50, 1003,880,42, 103,841,102, 139,859,42, 541,1030,53,
        562,1030,53, 601,1033,50, 622,980,103, 661,997,55, 682,958,113, 517,943,42, 766,1030,53, 826,1030,40,
        847,1030,40, 868,1046,25, 907,955,80, 928,973,65, 886,976,30, 376,1065,18, 397,1065,18, 838,916,42,
        742,796,50, 751,800,40, 237,733,33, 778,865,38, 799,845,30, 445,570,40, 516,180,35, 907,490,35,
      ];

      let seed = 7;
      const rand = () => (seed = (seed * 16807) % 2147483647) / 2147483647;
      const bar = (x, y, w, h) => `M${x} ${y}h${w}v${h}h${-w}z`;
      let d = "";
      for (let i = 0; i < across.length; i += 3) {
        d += bar(Math.round((across[i] - 67) / 3), Math.round((across[i + 1] - 55) / 3), Math.round(across[i + 2] / 3), 1);
      }
      for (let i = 0; i < down.length; i += 3) {
        d += bar(Math.round((down[i] - 67) / 3), Math.round((down[i + 1] - 55) / 3), 1, Math.round(down[i + 2] / 3));
      }

      // Small elements, denser in the lower left and along the middle: cx, cy, rx, ry, weight
      const clusters = [
        [80, 265, 75, 55, 0.9], [205, 80, 55, 75, 0.7], [180, 165, 45, 50, 0.8], [265, 140, 45, 60, 0.6],
        [130, 190, 60, 45, 0.6], [240, 260, 50, 60, 0.45], [300, 300, 50, 40, 0.35], [12, 10, 10, 12, 0.5],
        [135, 60, 35, 60, 0.4], [280, 60, 40, 60, 0.4], [60, 130, 40, 50, 0.2], [150, 300, 70, 35, 0.5],
      ];
      const density = (x, y) =>
        Math.max(0.07, ...clusters.map(([cx, cy, rx, ry, w]) => w * Math.exp(-(((x - cx) / rx) ** 2) - ((y - cy) / ry) ** 2)));
      const inWeb = (x, y) => x > 172 && x < 236 && y > 212 && y < 270;
      let dots = 0;
      while (dots < 2500) {
        const x = 3 + Math.floor(rand() * 338);
        const y = 3 + Math.floor(rand() * 336);
        if (inWeb(x, y) || rand() > density(x, y)) continue;
        const r = rand();
        if (r < 0.8) d += bar(x, y, 1, 1);
        else if (r < 0.89) d += bar(x, y, 2, 1);
        else d += bar(x, y, 1, 2);
        dots++;
      }
      for (let i = 0; i < 380; i++) {
        const x = 3 + Math.floor(rand() * 328);
        const y = 3 + Math.floor(rand() * 326);
        if (inWeb(x, y) || (x < 140 && y > 225 && i % 4)) continue;
        const len = 2 + Math.floor(rand() * rand() * 10);
        d += rand() < 0.55 ? bar(x, y, len, 1) : bar(x, y, 1, len);
        if (rand() < 0.15) d += bar(x, y, 1, len);
      }
      document.getElementById("mesh").setAttribute("d", d);
    </script>
  </body>
</html>
